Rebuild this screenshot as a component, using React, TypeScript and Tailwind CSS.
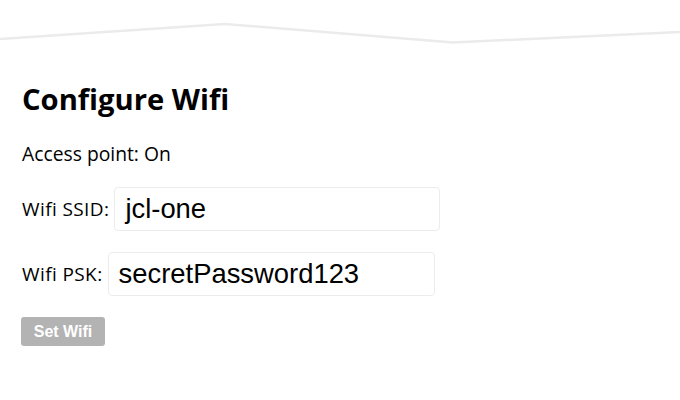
export default function App() {
  return (
    <div className="relative w-[680px] h-[400px] bg-white overflow-hidden font-['Open_Sans',sans-serif] text-black">
      <svg className="absolute left-0 top-0" width="680" height="60" viewBox="0 0 680 60">
        <polyline
          points="0,39 225,24 453,42.5 680,32"
          fill="none"
          stroke="#ebebeb"
          strokeWidth="2.5"
        />
      </svg>
      <div className="flex flex-col pt-[81px] pl-[22px]">
        <h1 className="text-[29.2px] leading-[36px] font-bold">Configure Wifi</h1>
        <p className="mt-[25px] text-[19.3px] leading-[24px]">Access point: On</p>
        <div className="mt-[21px] flex items-center gap-[5px]">
          <span className="text-[19px] tracking-[0.4px]">Wifi SSID:</span>
          <div className="w-[326px] h-[44px] border border-[#ececec] rounded-[4px] bg-white flex items-center px-[10px] font-['Liberation_Sans',sans-serif] text-[27.4px]">
            jcl-one
          </div>
        </div>
        <div className="mt-[21px] flex items-center gap-[5px]">
          <span className="text-[19px] tracking-[0.4px]">Wifi PSK:</span>
          <div className="w-[327px] h-[44px] border border-[#ececec] rounded-[4px] bg-white flex items-center px-[10px] font-['Liberation_Sans',sans-serif] text-[27.4px]">
            secretPassword123
          </div>
        </div>
        <div className="mt-[21px] -ml-[1px]">
          <button className="w-[84px] h-[29px] rounded-[3px] bg-[#b3b3b3] text-white font-bold text-[16px] font-['Liberation_Sans',sans-serif]">
            Set Wifi
          </button>
        </div>
      </div>
    </div>
  );
}
